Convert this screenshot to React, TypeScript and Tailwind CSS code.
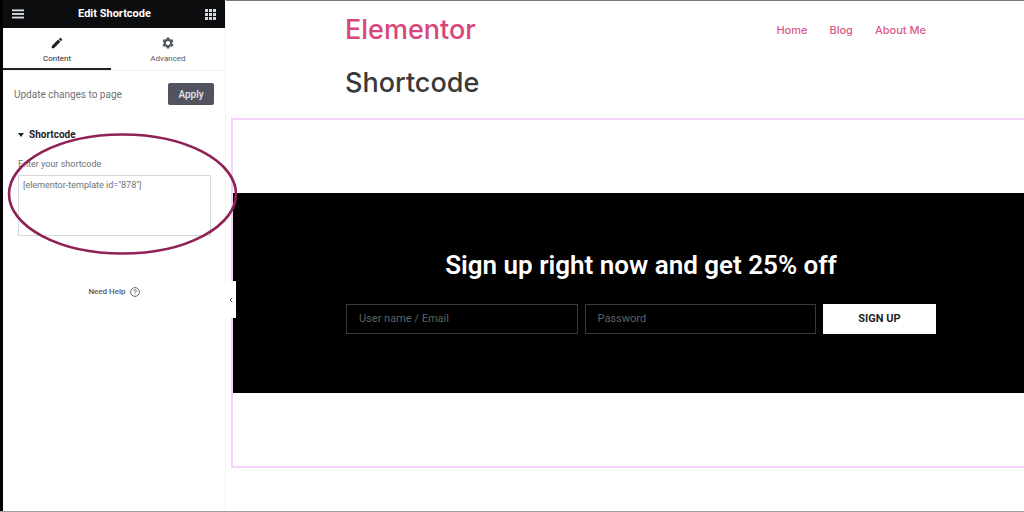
import { useState } from "react";
import { MdSettings, MdEdit } from "react-icons/md";
import { ChevronLeft } from "lucide-react";

const navLinks = ["Home", "Blog", "About Me"];

const GridIcon = () => (
  <svg viewBox="0 0 11 11" className="h-[11px] w-[11px]" fill="currentColor" aria-hidden="true">
    {[0, 4, 8].map((y) =>
      [0, 4, 8].map((x) => <rect key={`${x}-${y}`} x={x} y={y} width="3" height="3" />)
    )}
  </svg>
);

const MenuIcon = () => (
  <svg viewBox="0 0 12 10" className="h-[10px] w-3" fill="currentColor" aria-hidden="true">
    <rect y="0.4" width="12" height="1.9" />
    <rect y="4" width="12" height="1.9" />
    <rect y="7.6" width="12" height="1.9" />
  </svg>
);

const HelpIcon = () => (
  <svg viewBox="0 0 10 10" className="h-[10px] w-[10px]" fill="none" stroke="currentColor" aria-hidden="true">
    <circle cx="5" cy="5" r="4.4" strokeWidth="0.9" />
    <path d="M3.7 4.1a1.3 1.3 0 1 1 1.9 1.1c-.4.2-.6.4-.6.8" strokeWidth="0.9" />
    <path d="M5 6.7v.8" strokeWidth="0.9" />
  </svg>
);

const Sidebar = () => {
  const [shortcode, setShortcode] = useState('[elementor-template id="878"]');

  return (
    <aside className="relative z-10 flex w-[226px] shrink-0 flex-col border-r border-l-[3px] border-l-black border-r-[#f3f3f3] bg-white">
      <header className="flex h-7 items-center justify-between bg-[#0c0d0e] px-[9px] text-[#d5d8dc]">
        <button type="button" aria-label="Menu">
          <MenuIcon />
        </button>
        <h1 className="text-[11px] font-bold text-white">Edit Shortcode</h1>
        <button type="button" aria-label="Widgets">
          <GridIcon />
        </button>
      </header>

      {/* TABS */}
      <div className="flex h-[43px] border-b border-[#eeeeee] text-[8px]">
        <button
          type="button"
          className="flex w-[108px] flex-col items-center border-b-2 border-[#1f2124] pt-2 text-[#1f2124]"
        >
          <MdEdit className="mb-1 h-[14px] w-[14px]" />
          <span className="leading-[10px]">Content</span>
        </button>
        <button type="button" className="flex flex-1 flex-col items-center pt-2 text-[#515962]">
          <MdSettings className="mb-1 h-[14px] w-[14px]" />
          <span className="leading-[10px]">Advanced</span>
        </button>
      </div>

      <div className="mt-3 flex items-center justify-between px-[11px]">
        <span className="text-[10px] text-[#6d7278]">Update changes to page</span>
        <button
          type="button"
          className="h-[22px] w-[46px] rounded-[2px] bg-[#515460] text-[10px] font-medium text-[#e4e5e8]"
        >
          Apply
        </button>
      </div>

      {/* SHORTCODE CONTROL */}
      <section className="relative mt-[23px] flex flex-col px-[15px]">
        <h2 className="flex items-center gap-[5px] text-[10px] leading-[14px] font-bold text-[#1f2124]">
          <svg viewBox="0 0 6 4" className="h-1 w-[6px]" fill="currentColor" aria-hidden="true">
            <path d="M0 0h6L3 4z" />
          </svg>
          Shortcode
        </h2>
        <label htmlFor="shortcode" className="mt-4 text-[9px] leading-[13px] text-[#6d7278]">
          Enter your shortcode
        </label>
        <textarea
          id="shortcode"
          value={shortcode}
          onChange={(e) => setShortcode(e.target.value)}
          className="mt-1 h-[61px] w-[193px] resize-none border border-[#d5d8dc] px-1 py-[3px] text-[9px] leading-3 text-[#6d7278] outline-none"
        />
        {/* highlight ring around the field */}
        <svg
          viewBox="0 0 230 124"
          className="pointer-events-none absolute top-[3px] left-1 h-[124px] w-[230px]"
          fill="none"
          stroke="#8f2157"
          strokeWidth="2.6"
          aria-hidden="true"
        >
          <ellipse cx="115.5" cy="63" rx="113.5" ry="59.5" />
        </svg>
      </section>

      <a href="#help" className="mt-[50px] flex items-center justify-center gap-1 text-[8px] leading-3 font-medium text-[#515962]">
        Need Help
        <HelpIcon />
      </a>

      <button
        type="button"
        aria-label="Collapse panel"
        className="absolute top-[281px] -right-[11px] flex h-[37px] w-[11px] items-center justify-center bg-white text-[#515962]"
      >
        <ChevronLeft size={8} strokeWidth={3} />
      </button>
    </aside>
  );
};

const SignupForm = () => (
  <form
    onSubmit={(e) => e.preventDefault()}
    className="bg-black pt-[54px] pb-[59px] pl-[113px]"
  >
    <div className="w-[590px]">
      <h2 className="text-center text-[26px] leading-9 font-semibold text-white">
        Sign up right now and get 25% off
      </h2>
      <div className="mt-[21px] flex h-[30px] gap-[7px] text-[11px]">
        <input
          type="text"
          aria-label="User name / Email"
          placeholder="User name / Email"
          className="min-w-0 flex-1 border border-[#3a3a3a] bg-transparent px-3 text-white outline-none placeholder:text-[#606060]"
        />
        <input
          type="password"
          aria-label="Password"
          placeholder="Password"
          className="min-w-0 flex-1 border border-[#3a3a3a] bg-transparent px-3 text-white outline-none placeholder:text-[#606060]"
        />
        <button type="submit" className="w-[113px] bg-white font-bold text-[#1f1f1f]">
          SIGN UP
        </button>
      </div>
    </div>
  </form>
);

const Preview = () => (
  <main className="min-w-0 flex-1 overflow-hidden border-t border-[#777777] bg-white pl-[5px]">
    <div className="pl-[114px] font-[Inter,sans-serif]">
      <header className="flex w-[581px] items-center justify-between pt-[11px]">
        <a href="#home" className="text-[27px] leading-9 font-medium text-[#d9467a]">
          Elementor
        </a>
        <nav className="flex gap-[22px] text-[11px] font-medium text-[#dc5a88]">
          {navLinks.map((link) => (
            <a key={link} href="#nav">
              {link}
            </a>
          ))}
        </nav>
      </header>
      <h1 className="mt-[17px] text-[27px] leading-9 font-medium text-[#3a3a3a]">Shortcode</h1>
    </div>
    <section className="mt-[17px] border-2 border-r-0 border-[#f5d3fb] pt-[73px] pb-[73px]">
      <SignupForm />
    </section>
  </main>
);

export default function App() {
  return (
    <div className="flex min-h-screen border-b border-[#a0a0a0] bg-white font-[Roboto,sans-serif]">
      <Sidebar />
      <Preview />
    </div>
  );
}
